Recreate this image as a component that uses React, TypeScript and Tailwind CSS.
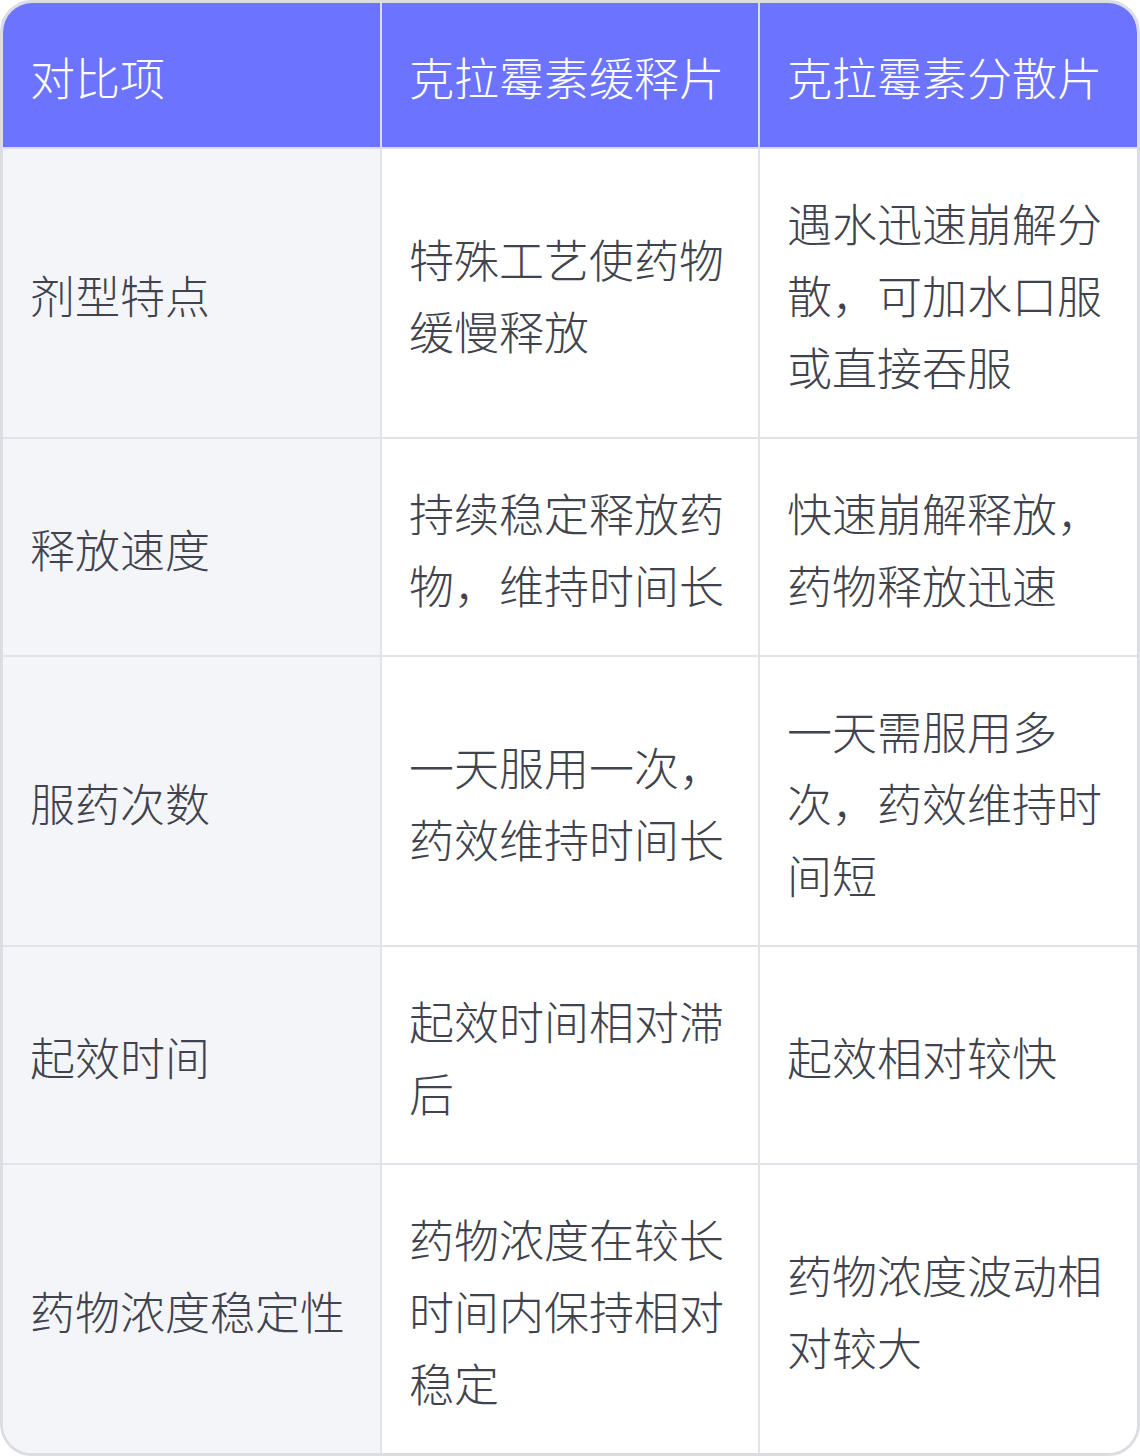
import React from "react";

const rows: [string, string, string][] = [
  ["剂型特点", "特殊工艺使药物缓慢释放", "遇水迅速崩解分散，可加水口服或直接吞服"],
  ["释放速度", "持续稳定释放药物，维持时间长", "快速崩解释放，药物释放迅速"],
  ["服药次数", "一天服用一次，药效维持时间长", "一天需服用多次，药效维持时间短"],
  ["起效时间", "起效时间相对滞后", "起效相对较快"],
  ["药物浓度稳定性", "药物浓度在较长时间内保持相对稳定", "药物浓度波动相对较大"],
];

export default function App() {
  return (
    <div
      className="w-[1140px] h-[1456px] bg-white"
      style={{ fontFamily: '"Noto Sans CJK SC", "Noto Sans", sans-serif' }}
    >
      <div className="w-[1140px] overflow-hidden rounded-[32px] border-[3px] border-[#dcdde3]">
        <table className="w-full table-fixed border-collapse border-hidden text-[45px] leading-[72px] font-light">
          <thead>
            <tr className="bg-[#6c74ff] text-white">
              <th className="w-1/3 border-2 border-[#dcdde3] px-[27px] pt-[38px] pb-[34px] text-left font-light">对比项</th>
              <th className="w-1/3 border-2 border-[#dcdde3] px-[27px] pt-[38px] pb-[34px] text-left font-light">克拉霉素缓释片</th>
              <th className="w-1/3 border-2 border-[#dcdde3] px-[27px] pt-[38px] pb-[34px] text-left font-light">克拉霉素分散片</th>
            </tr>
          </thead>
          <tbody>
            {rows.map((r, i) => (
              <tr key={i} className="text-[#40434d]">
                <td className="border-2 border-[#e2e3e8] bg-[#f4f5f9] px-[27px] pt-[38px] pb-[34px] align-middle">{r[0]}</td>
                <td className="border-2 border-[#e2e3e8] bg-white px-[27px] pt-[38px] pb-[34px] align-middle">{r[1]}</td>
                <td className="border-2 border-[#e2e3e8] bg-white px-[27px] pt-[38px] pb-[34px] align-middle">{r[2]}</td>
              </tr>
            ))}
          </tbody>
        </table>
      </div>
    </div>
  );
}
